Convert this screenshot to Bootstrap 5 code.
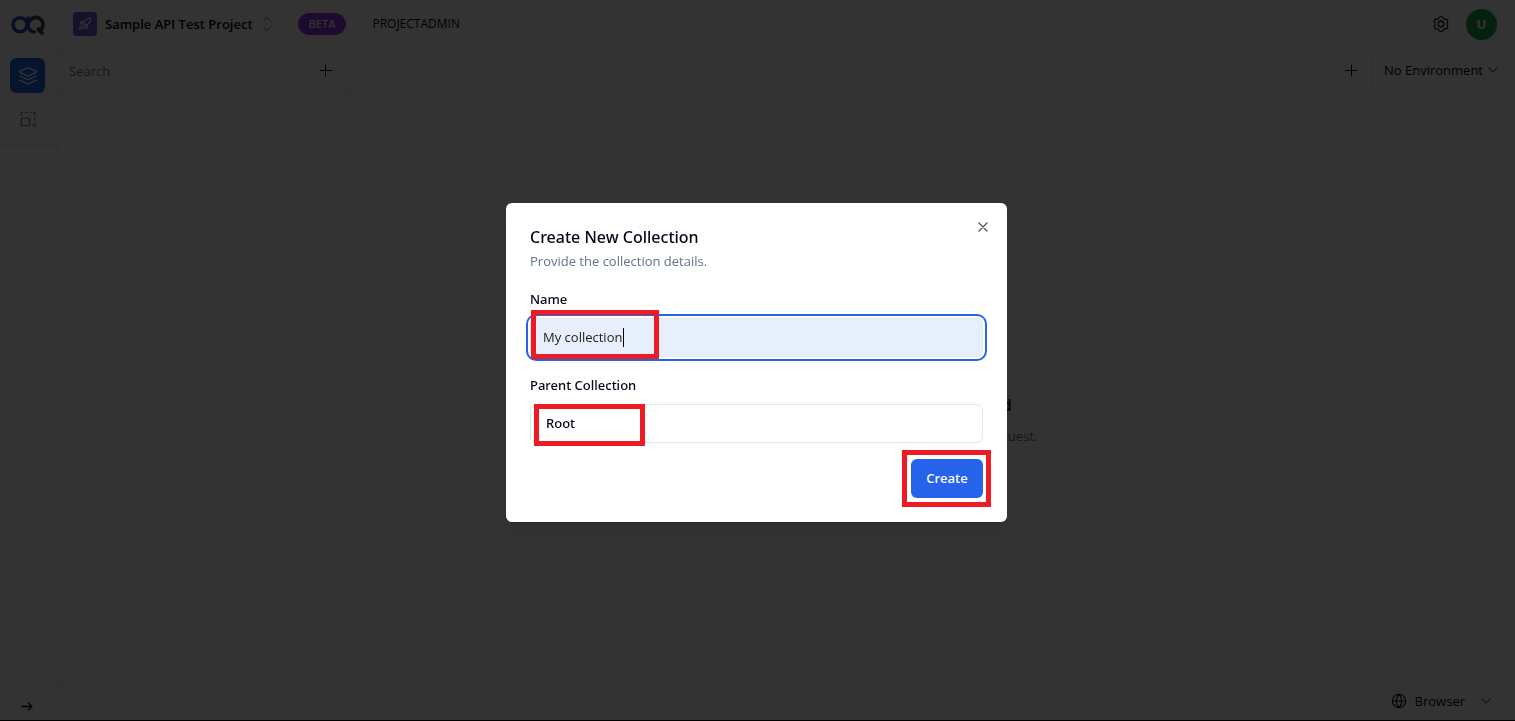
<!DOCTYPE html>
<html lang="en">
<head>
<meta charset="utf-8">
<meta name="viewport" content="width=device-width, initial-scale=1">
<title>Sample API Test Project</title>
<link href="https://cdn.jsdelivr.net/npm/bootstrap@5.3.0/dist/css/bootstrap.min.css" rel="stylesheet">
<style>
:root{--line:#e2e8f0;--ink:#020817;--muted-ink:#64748b}
body{font-family:"Open Sans","Noto Sans",sans-serif;font-size:13px;line-height:20px;color:var(--ink);background:#fff}
svg{fill:none;stroke:currentColor;stroke-width:2;stroke-linecap:round;stroke-linejoin:round;display:block;flex:none}
.thin{stroke-width:1}
.fine{stroke-width:1.3}
.medium{stroke-width:1.6}
.plain{background:none;border:0;padding:0;color:inherit;display:flex;align-items:center;justify-content:center}
.line-b{border-bottom:1px solid var(--line)}
.line-t{border-top:1px solid var(--line)}
.line-l{border-left:1px solid var(--line)}
.line-r{border-right:1px solid var(--line)}
.app{border-bottom:1px solid #000}
.rail{width:58px}
.rail-logo{height:50px;padding-right:2px}
.rail-tools{height:95px;gap:8px;padding-top:8px;padding-right:2px}
.rail-item{width:35px;height:35px;border-radius:6px;color:var(--muted-ink);display:flex;align-items:center;justify-content:center}
.rail-item.on{background:#2563eb;color:#fff}
.topbar{height:51px;padding:0 18px 2px 15px}
.project-icon{width:24px;height:24px;border-radius:4px;background:#6d5bd8;color:#fff}
.project-name{font-weight:600;margin:0 9px 0 8px}
.soft{color:var(--muted-ink)}
.tag{font-size:12px;line-height:20px;font-weight:500;border:1px solid var(--line);border-radius:12px;padding:0 9px}
.tag-beta{background:#9333ea;border-color:#9333ea;color:#f8fafc;font-size:11px;font-weight:600;padding:0 10px;margin-left:26px;margin-right:16px}
.avatar{width:31px;height:31px;border-radius:50%;background:#16a34a;color:#fff;font-weight:700}
.side{width:292px}
.side-bar{height:40px}
.side-bar input{border:0;background:none;outline:0;padding:0 11px;min-width:0;color:inherit}
.side-bar input::placeholder{color:var(--muted-ink);opacity:1}
.add-btn{width:48px}
.new-tab{width:40px}
.tabs-bar{height:39px}
.env{padding:0 16px 0 12px;gap:4px}
.empty{padding-top:68px}
.empty-title{font-size:16px;line-height:24px;font-weight:600;margin:0 0 9px}
.foot{height:39px;padding-right:23px}
.foot .plain{gap:8px}
.foot .arrow{margin-left:7px}
.modal-backdrop{--bs-backdrop-opacity:.8}
.new-modal{padding:3px 2px 0 0}
.new-dialog{--bs-modal-width:501px;--bs-modal-margin:0px;margin:0 auto}
.new-dialog .modal-content{border:0;border-radius:6px;padding:24px;color:var(--ink);box-shadow:0 10px 15px -3px rgba(0,0,0,.1),0 4px 6px -4px rgba(0,0,0,.1)}
.dialog-title{font-family:"Noto Sans","Open Sans",sans-serif;font-size:16px;line-height:20px;font-weight:500;margin:0 0 4px}
.close-x{position:absolute;top:16px;right:16px;width:16px;height:16px;color:#4b5563}
.field-group{margin-top:18px}
.field-name{display:block;width:fit-content;font-family:"Noto Sans","Open Sans",sans-serif;font-weight:500;margin-bottom:9px}
.new-dialog .form-control{height:39px;font-size:13px;line-height:20px;padding:0 12px;border:1px solid var(--line);border-radius:6px;color:var(--ink)}
.new-dialog .name-input{background:#e8effc;color:#222;box-shadow:0 0 0 2px #fff,0 0 0 4px #2563eb}
.new-dialog .parent-btn{padding:0 15px;font-family:"Noto Sans","Open Sans",sans-serif;font-weight:500;text-align:left}
.new-dialog .create-btn{height:39px;font-size:13px;font-weight:600;line-height:20px;padding:0;width:72px;border:0;border-radius:6px;background:#2563eb;color:#f8fafc}
.frame{position:absolute;border:5px solid #ed1c24;pointer-events:none}
.frame-name{left:1px;top:-8px;width:128px;height:49px}
.frame-parent{left:4px;top:0;width:111px;height:42px}
.frame-create{inset:-9px -8px -9px -9px}
.caret{position:absolute;left:93px;top:10px;width:1px;height:19px;background:#000}
</style>
</head>
<body>
<div class="app d-flex vh-100">
  <nav class="rail line-r d-flex flex-column flex-shrink-0" aria-label="Tools">
    <a href="#" class="rail-logo line-b d-flex align-items-center justify-content-center" aria-label="Home">
      <svg width="34" height="20" viewBox="0 0 34 20" stroke-linecap="butt">
        <g style="stroke-width:3.600">
          <path d="M18.500 6.500C19.800 4 22 2.400 25 2.400c4 0 7 3.100 7 7 0 3-1.500 5.300-3.600 6.500" stroke="#334139"/>
          <path d="M27.500 14l3.500 4" stroke="#334139"/>
          <path d="M17 3v6c0 5 3 8 6.500 8" stroke="#2447b8"/>
          <circle cx="9" cy="9.700" r="7" stroke="#2447b8"/>
        </g>
      </svg>
    </a>
    <div class="rail-tools line-b d-flex flex-column align-items-center">
      <a href="#" class="rail-item on" aria-label="Collections"><svg class="medium" width="20" height="20" viewBox="0 0 24 24"><path d="m12.800 2.200a2 2 0 0 0-1.600 0L2.600 6.100a1 1 0 0 0 0 1.800l8.600 3.900a2 2 0 0 0 1.600 0l8.600-3.900a1 1 0 0 0 0-1.800Z"/><path d="m22 12-9.200 4.200a2 2 0 0 1-1.600 0L2 12M22 17l-9.200 4.200a2 2 0 0 1-1.600 0L2 17"/></svg></a>
      <a href="#" class="rail-item" aria-label="Environments"><svg class="medium" width="18" height="18" viewBox="0 0 24 24"><rect x="3" y="11" width="11" height="10"/><path d="M3 7V3h2M9 3h3M16 3h5v3M21 10v4M21 18v3h-3"/></svg></a>
    </div>
    <button class="plain mt-auto mb-1 pe-1" aria-label="Expand"><svg class="fine" width="16" height="20" viewBox="0 0 16 20"><path d="M3 10.500h10M9.500 7l3.500 3.500L9.500 14"/></svg></button>
  </nav>

  <div class="d-flex flex-column flex-grow-1">
    <header class="topbar line-b d-flex align-items-center">
      <span class="project-icon d-flex align-items-center justify-content-center"><svg width="14" height="14" viewBox="0 0 24 24"><path d="M4.500 16.500c-1.500 1.300-2 5-2 5s3.700-.5 5-2c.700-.840.700-2.130-.090-2.910a2.180 2.180 0 0 0-2.910-.090ZM12 15l-3-3a22 22 0 0 1 2-3.950A12.900 12.900 0 0 1 22 2c0 2.720-.780 7.500-6 11a22.400 22.400 0 0 1-4 2ZM9 12H4s.550-3.030 2-4c1.620-1.080 5 0 5 0M12 15v5s3.030-.550 4-2c1.080-1.620 0-5 0-5"/></svg></span>
      <span class="project-name">Sample API Test Project</span>
      <button class="plain soft" aria-label="Switch project"><svg class="thin" width="10" height="16" viewBox="0 0 10 16"><path d="m1.500 5 3.500-3.500L8.500 5M1.500 11 5 14.500 8.500 11"/></svg></button>
      <span class="tag tag-beta">BETA</span>
      <span class="tag">PROJECTADMIN</span>
      <button class="plain ms-auto" aria-label="Settings"><svg class="medium" width="18" height="18" viewBox="0 0 24 24"><path d="M9.200 3.800C9.800 2.300 10.300 2 12 2s2.200.3 2.800 1.800c.5 1.200 1.600 1.800 2.900 1.600 1.600-.2 2.200 0 3 1.500.9 1.500.8 2.100-.2 3.400-.8 1-.8 2.400 0 3.400 1 1.300 1.100 1.900.2 3.400-.8 1.500-1.400 1.700-3 1.500-1.300-.2-2.400.4-2.900 1.600-.6 1.500-1.100 1.800-2.800 1.800s-2.200-.3-2.800-1.800c-.5-1.200-1.600-1.800-2.900-1.600-1.600.2-2.200 0-3-1.500-.9-1.500-.8-2.100.2-3.400.8-1 .8-2.400 0-3.400-1-1.300-1.100-1.900-.2-3.400.8-1.500 1.400-1.700 3-1.500 1.300.2 2.400-.4 2.900-1.600Z"/><circle cx="12" cy="12" r="3.800"/></svg></button>
      <button class="plain avatar ms-3" aria-label="Account">U</button>
    </header>

    <div class="d-flex flex-grow-1">
      <aside class="side line-r flex-shrink-0">
        <div class="side-bar line-b d-flex">
          <input type="text" class="flex-grow-1" placeholder="Search" aria-label="Search">
          <button class="plain add-btn line-l" aria-label="Add collection"><svg class="thin" width="14" height="14" viewBox="0 0 14 14"><path d="M1.500 6.500h11M6.500 1v11"/></svg></button>
        </div>
      </aside>
      <main class="flex-grow-1 d-flex flex-column">
        <div class="tabs-bar line-b d-flex justify-content-end">
          <button class="plain new-tab" aria-label="New tab"><svg class="thin" width="14" height="14" viewBox="0 0 14 14"><path d="M1.500 7.500h11M7.500 2v11"/></svg></button>
          <button class="plain env line-l">No Environment <svg class="soft fine" width="12" height="12" viewBox="0 0 12 12"><path d="m2 4 4 4 4-4"/></svg></button>
        </div>
        <div class="empty flex-grow-1 d-flex flex-column align-items-center justify-content-center">
          <h2 class="empty-title">No Request Selected</h2>
          <p class="soft mb-0">Select or create a new API request.</p>
        </div>
      </main>
    </div>

    <footer class="foot line-t d-flex align-items-center justify-content-end">
      <button class="plain"><svg class="medium" width="16" height="16" viewBox="0 0 24 24"><circle cx="12" cy="12" r="10"/><path d="M12 2a14.500 14.500 0 0 0 0 20 14.500 14.500 0 0 0 0-20M2 12h20"/></svg> Browser <svg class="soft arrow fine" width="12" height="12" viewBox="0 0 12 12"><path d="m1.500 4 4.500 4 4.500-4"/></svg></button>
    </footer>
  </div>
</div>

<div class="modal-backdrop show"></div>
<div class="modal new-modal show d-block" tabindex="-1" role="dialog" aria-labelledby="dlgTitle">
  <div class="modal-dialog modal-dialog-centered new-dialog">
    <form class="modal-content">
      <h1 class="dialog-title" id="dlgTitle">Create New Collection</h1>
      <button type="button" class="plain close-x" aria-label="Close"><svg class="fine" width="12" height="12" viewBox="0 0 12 12"><path d="m2 2 8 8M10 2l-8 8"/></svg></button>
      <p class="soft mb-0">Provide the collection details.</p>
      <div class="field-group">
        <label class="field-name" for="collectionName">Name</label>
        <div class="position-relative">
          <input type="text" class="form-control name-input" id="collectionName" value="My collection">
          <span class="caret"></span>
          <span class="frame frame-name"></span>
        </div>
      </div>
      <div class="field-group">
        <label class="field-name" for="parentCollection">Parent Collection</label>
        <div class="position-relative">
          <button type="button" class="form-control parent-btn" id="parentCollection">Root</button>
          <span class="frame frame-parent"></span>
        </div>
      </div>
      <div class="position-relative align-self-end mt-3">
        <button type="submit" class="btn btn-primary create-btn d-block">Create</button>
        <span class="frame frame-create"></span>
      </div>
    </form>
  </div>
</div>
<script src="https://cdn.jsdelivr.net/npm/bootstrap@5.3.0/dist/js/bootstrap.bundle.min.js"></script>
</body>
</html>
